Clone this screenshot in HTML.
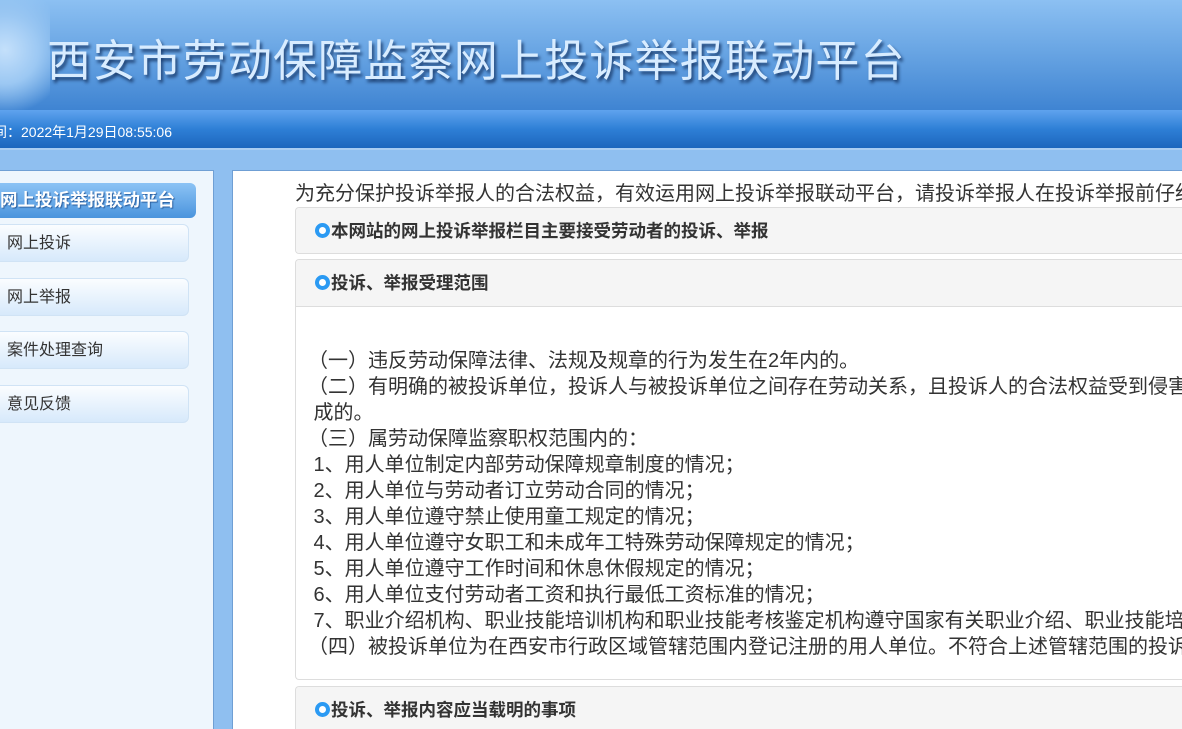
<!DOCTYPE html>
<html><head><meta charset="utf-8"><style>
*{margin:0;padding:0;box-sizing:border-box}
body{width:1182px;height:729px;overflow:hidden;background:#8fbff0;font-family:"Liberation Sans","Noto Sans CJK SC",sans-serif;position:relative}
.hdr{position:absolute;left:0;top:0;width:1182px;height:110px;background:linear-gradient(180deg,#8cc0f2 0%,#6aa6e4 45%,#3f84d2 100%)}
.hdr .glow{position:absolute;left:0;top:0;width:50px;height:110px;background:radial-gradient(circle at 5px 50px,#c4e0fb 0,#9cc8f3 45%,transparent 85%)}
.hdr h1{position:absolute;left:47px;top:30px;font-size:44px;font-weight:normal;color:#d8ecff;letter-spacing:1.2px;text-shadow:2px 3px 3px #1d3f70;white-space:nowrap;font-family:"Noto Sans CJK SC",sans-serif;line-height:54px}
.bar{position:absolute;left:0;top:110px;width:1182px;height:40px;background:linear-gradient(180deg,#5fa3ee 0%,#2e7fd6 50%,#1c66bd 100%);border-bottom:2px solid #a9cdf2;overflow:hidden}
.bar span{position:absolute;left:-7px;top:12px;color:#fff;font-size:14px;white-space:nowrap}
.side{position:absolute;left:0;top:170px;width:214px;height:559px;background:#eef6fd;border:1px solid #6f9fd4;border-left:none;border-bottom:none}
.stitle{position:absolute;left:0;top:183px;width:196px;height:35px;border-radius:0 6px 6px 0;background:linear-gradient(180deg,#8cc3f5,#4a94dd);color:#fff;font-weight:bold;font-size:17.5px;line-height:35px;white-space:nowrap;text-shadow:1px 1px 1px #2a5e9e}
.item{position:absolute;left:0;width:189px;height:38px;border-radius:0 6px 6px 0;background:linear-gradient(180deg,#fbfdff,#d7e9fb);border:1px solid #d0e3f5;border-left:none;font-size:16px;color:#333;line-height:38px;padding-left:7px}
.main{position:absolute;left:232px;top:170px;width:950px;height:559px;background:#fff;border:1px solid #6f9fd4;border-right:none;border-bottom:none}
.intro{position:absolute;left:295px;top:181px;width:887px;overflow:hidden;font-size:20px;color:#333;white-space:nowrap;line-height:26px}
.box{position:absolute;left:295px;width:887px;border:1px solid #ddd;border-right:none;border-radius:4px 0 0 4px;background:#fff;overflow:hidden}
.bh{height:46px;background:#f5f5f5;font-weight:bold;font-size:17.5px;color:#333;line-height:46px;padding-left:19px;position:relative;white-space:nowrap}
.bh i{display:inline-block;width:15px;height:15px;border-radius:50%;border:4px solid #2b9af3;background:#fff;vertical-align:-1px;margin-right:1px}
.bc{border-top:1px solid #ddd;padding:41px 0 0 12px;font-size:20px;color:#333;line-height:26px;white-space:nowrap;overflow:hidden}
</style></head><body>
<div class="hdr"><div class="glow"></div><h1>西安市劳动保障监察网上投诉举报联动平台</h1></div>
<div class="bar"><span>间：2022年1月29日08:55:06</span></div>
<div class="side"></div>
<div class="stitle">网上投诉举报联动平台</div>
<div class="item" style="top:224px">网上投诉</div>
<div class="item" style="top:278px">网上举报</div>
<div class="item" style="top:331px">案件处理查询</div>
<div class="item" style="top:385px">意见反馈</div>
<div class="main"></div>
<div class="intro">为充分保护投诉举报人的合法权益，有效运用网上投诉举报联动平台，请投诉举报人在投诉举报前仔细阅读以下内容</div>
<div class="box" style="top:207px;height:47px"><div class="bh"><i></i>本网站的网上投诉举报栏目主要接受劳动者的投诉、举报</div></div>
<div class="box" style="top:259px;height:421px"><div class="bh"><i></i>投诉、举报受理范围</div>
<div class="bc">（一）违反劳动保障法律、法规及规章的行为发生在2年内的。<br>（二）有明确的被投诉单位，投诉人与被投诉单位之间存在劳动关系，且投诉人的合法权益受到侵害<br>&nbsp;成的。<br>（三）属劳动保障监察职权范围内的：<br>&nbsp;1、用人单位制定内部劳动保障规章制度的情况；<br>&nbsp;2、用人单位与劳动者订立劳动合同的情况；<br>&nbsp;3、用人单位遵守禁止使用童工规定的情况；<br>&nbsp;4、用人单位遵守女职工和未成年工特殊劳动保障规定的情况；<br>&nbsp;5、用人单位遵守工作时间和休息休假规定的情况；<br>&nbsp;6、用人单位支付劳动者工资和执行最低工资标准的情况；<br>&nbsp;7、职业介绍机构、职业技能培训机构和职业技能考核鉴定机构遵守国家有关职业介绍、职业技能培训<br>（四）被投诉单位为在西安市行政区域管辖范围内登记注册的用人单位。不符合上述管辖范围的投诉</div></div>
<div class="box" style="top:686px;height:43px;border-bottom:none;border-radius:4px 0 0 0"><div class="bh"><i></i>投诉、举报内容应当载明的事项</div></div>
</body></html>
